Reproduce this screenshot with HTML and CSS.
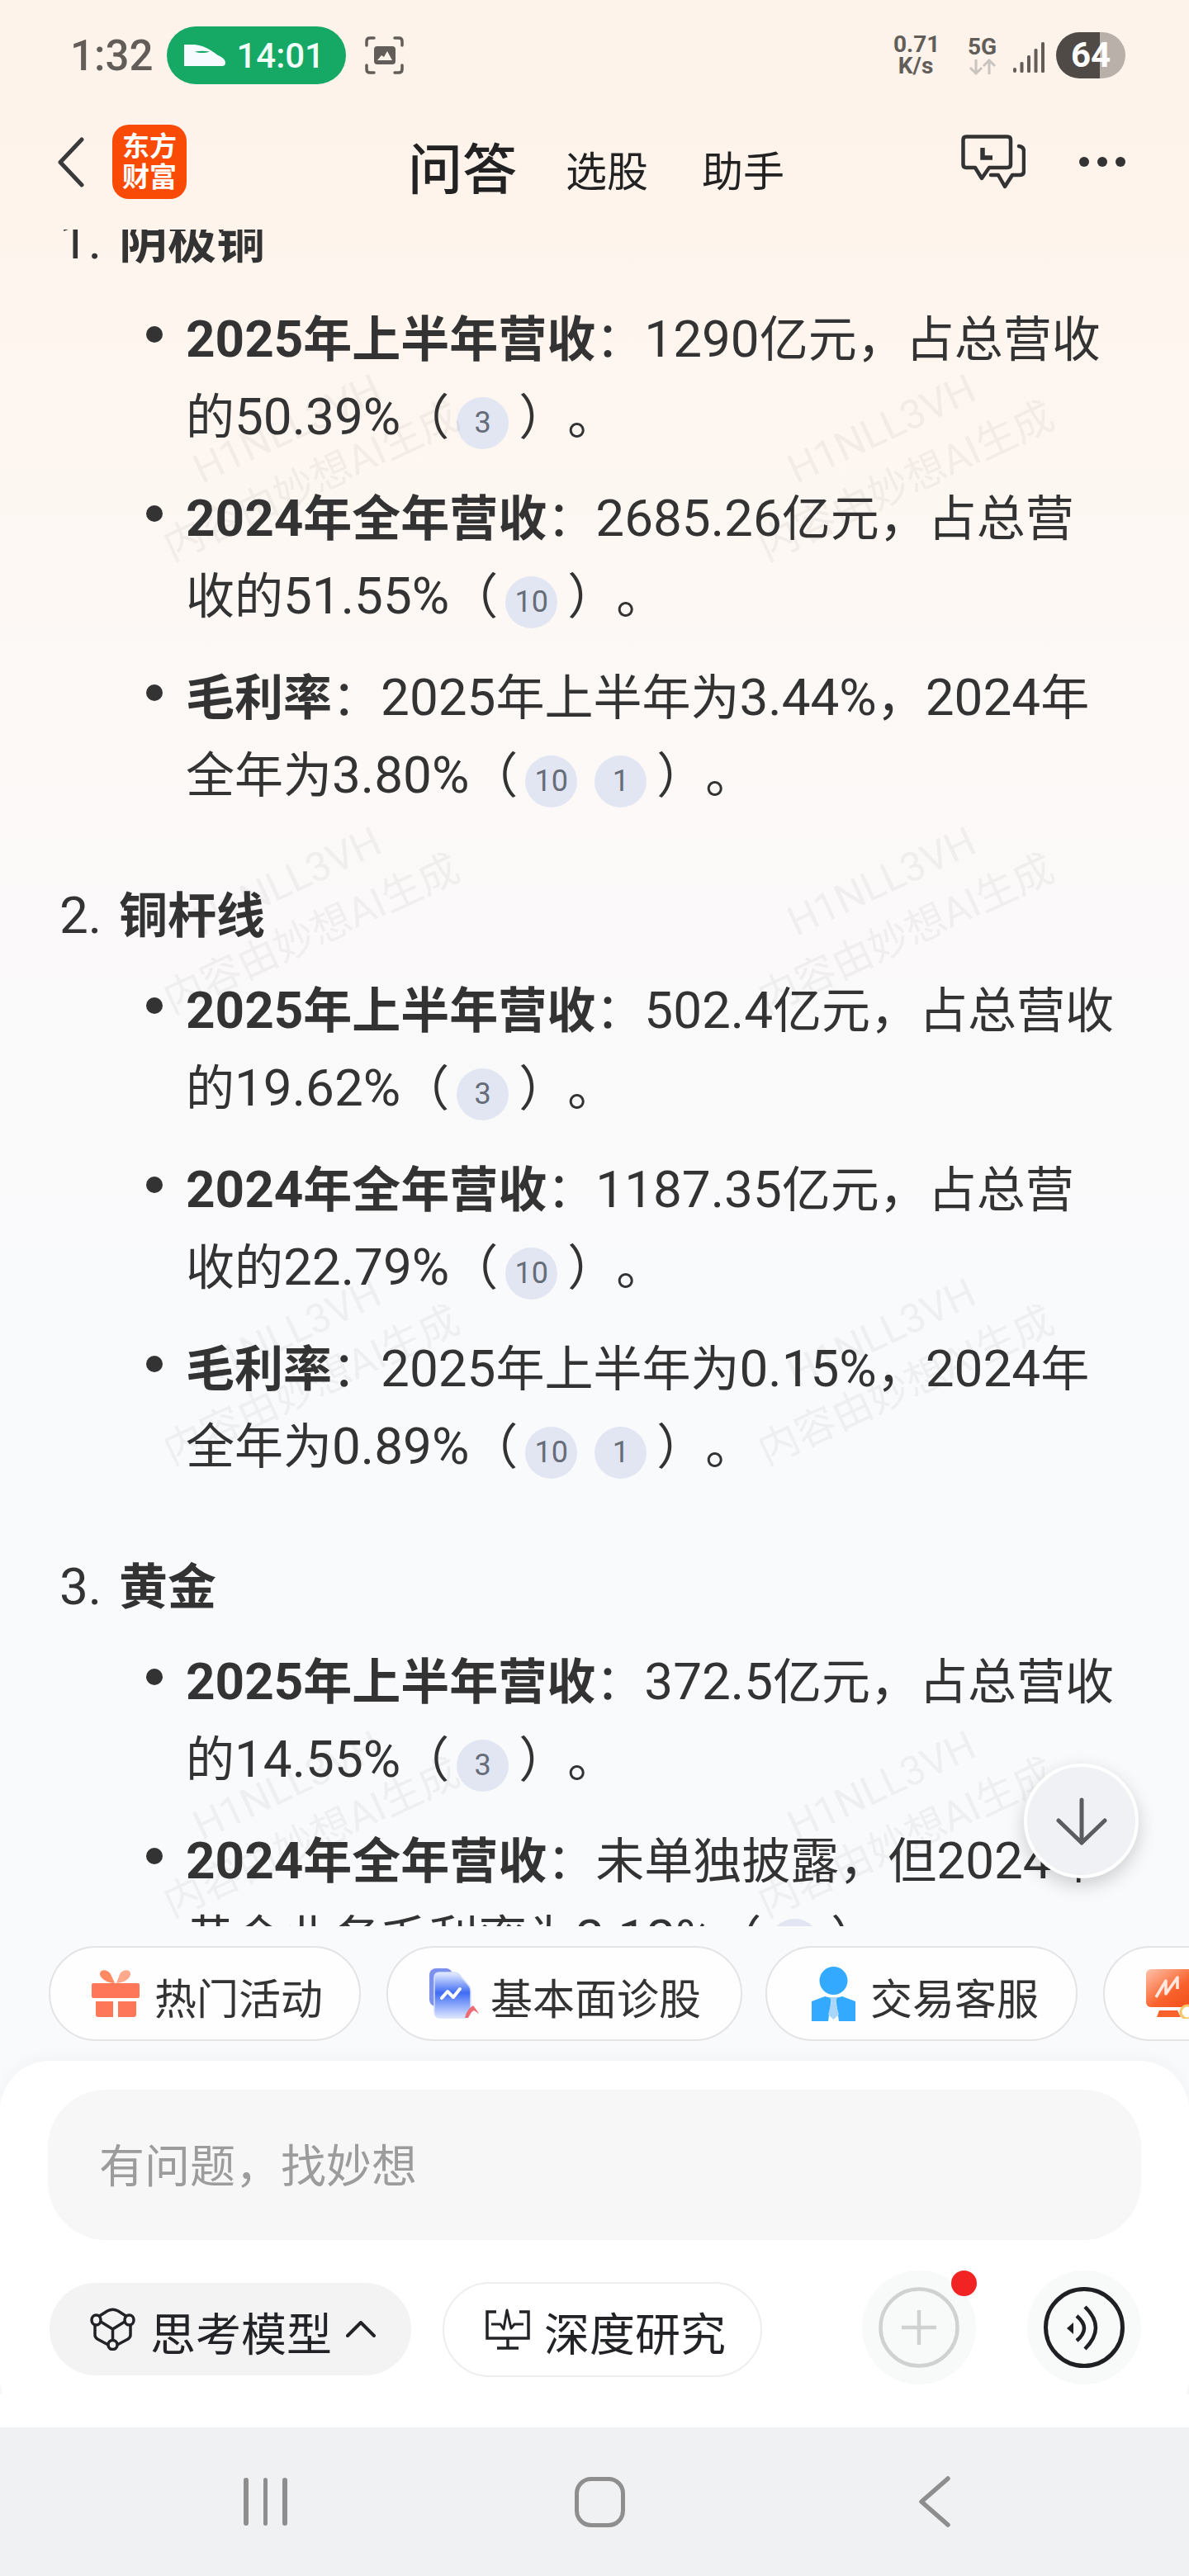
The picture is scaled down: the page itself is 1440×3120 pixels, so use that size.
FILE: index.html
```html
<!DOCTYPE html>
<html lang="zh-CN">
<head>
<meta charset="UTF-8">
<meta name="viewport" content="width=device-width, initial-scale=1.0">
<title>问答</title>
<link rel="stylesheet" href="styles.css">
</head>
<body>
<div class="page">

    <!-- phone status bar -->
    <div class="status-bar">
        <span class="clock">1:32</span>
        <div class="trip-pill">
            <svg class="train" width="50" height="26" viewBox="0 0 50 26">
                <path d="M0 0H13C24 1 33 7 41 13C46 15 50 18 50 22C50 25 48 26 46 26H0Z" fill="#f6fbff"/>
                <path d="M13 8.500C19 7.500 25 7.500 31 8.500C25 10.500 18 10.500 13 8.500Z" fill="#16a865"/>
            </svg>
            <span>14:01</span>
        </div>
        <svg class="shot-icon" width="47" height="46" viewBox="0 0 47 46">
            <path d="M2 11V6Q2 2 6 2H11M36 2H41Q45 2 45 6V11M45 35V40Q45 44 41 44H36M11 44H6Q2 44 2 40V35" fill="none" stroke="#625d58" stroke-width="3.500" stroke-linecap="round"/>
            <rect x="11" y="12" width="26" height="22" rx="4" fill="#625d58"/>
            <path d="M15 29L20 23L23 25L27 18L33 29Z" fill="#fdf3ea"/>
        </svg>
        <div class="status-right">
            <div class="net-speed">0.71<br>K/s</div>
            <div class="net-type">
                <span>5G</span>
                <svg width="34" height="20" viewBox="0 0 34 20">
                    <path d="M9 1V18M2 11L9 18L16 11" fill="none" stroke="#c9c4bf" stroke-width="3"/>
                    <path d="M25 19V2M18 9L25 2L32 9" fill="none" stroke="#c9c4bf" stroke-width="3"/>
                </svg>
            </div>
            <svg class="signal" width="38" height="37" viewBox="0 0 38 37">
                <g fill="#625d58">
                    <rect x="0" y="31" width="4" height="6" rx="2"/>
                    <rect x="8.500" y="24" width="4" height="13" rx="1.500"/>
                    <rect x="17" y="16" width="4" height="21" rx="1.500"/>
                    <rect x="25.500" y="8" width="4" height="29" rx="1.500"/>
                    <rect x="34" y="0" width="4" height="37" rx="1.500"/>
                </g>
            </svg>
            <div class="battery">64</div>
        </div>
    </div>

    <!-- app header -->
    <div class="app-header">
        <svg class="back" width="32" height="61" viewBox="0 0 32 61">
            <path d="M29 3L3 30.500L29 58" fill="none" stroke="#3a3a3a" stroke-width="5" stroke-linecap="round" stroke-linejoin="round"/>
        </svg>
        <div class="logo">东方<br>财富</div>
        <div class="tabs">
            <span class="tab-main">问答</span>
            <span class="tab">选股</span>
            <span class="tab">助手</span>
        </div>
        <div class="header-actions">
            <svg width="78" height="66" viewBox="0 0 78 66">
                <g fill="none" stroke="#333" stroke-width="4.500" stroke-linejoin="round" stroke-linecap="round">
                    <path d="M6 2.500H56Q60 2.500 60 6.500V36Q60 40 56 40H34L25 53L17 40H6Q2.500 40 2.500 36V6.500Q2.500 2.500 6 2.500Z"/>
                    <path d="M70 14Q76 15 76 20V44Q76 49 71 49H62L53 63L45 49H36"/>
                </g>
                <path d="M26 16V28H38" fill="none" stroke="#333" stroke-width="5.500"/>
            </svg>
            <div class="more"><i></i><i></i><i></i></div>
        </div>
    </div>

    <!-- answer text -->
    <div class="content">
        <h3><span class="num">1.</span>阴极铜</h3>
        <ul>
            <li><b><span class="n">2025</span>年上半年营收</b>：<span class="n">1290</span>亿元，占总营收的<span class="n">50.39%</span>（<span class="ref">3</span>）。</li>
            <li><b><span class="n">2024</span>年全年营收</b>：<span class="n">2685.26</span>亿元，占总营收的<span class="n">51.55%</span>（<span class="ref">10</span>）。</li>
            <li><b>毛利率</b>：<span class="n">2025</span>年上半年为<span class="n">3.44%</span>，<span class="n">2024</span>年全年为<span class="n">3.80%</span>（<span class="ref">10</span><span class="ref">1</span>）。</li>
        </ul>
        <h3><span class="num">2.</span>铜杆线</h3>
        <ul>
            <li><b><span class="n">2025</span>年上半年营收</b>：<span class="n">502.4</span>亿元，占总营收的<span class="n">19.62%</span>（<span class="ref">3</span>）。</li>
            <li><b><span class="n">2024</span>年全年营收</b>：<span class="n">1187.35</span>亿元，占总营收的<span class="n">22.79%</span>（<span class="ref">10</span>）。</li>
            <li><b>毛利率</b>：<span class="n">2025</span>年上半年为<span class="n">0.15%</span>，<span class="n">2024</span>年全年为<span class="n">0.89%</span>（<span class="ref">10</span><span class="ref">1</span>）。</li>
        </ul>
        <h3><span class="num">3.</span>黄金</h3>
        <ul>
            <li><b><span class="n">2025</span>年上半年营收</b>：<span class="n">372.5</span>亿元，占总营收的<span class="n">14.55%</span>（<span class="ref">3</span>）。</li>
            <li><b><span class="n">2024</span>年全年营收</b>：未单独披露，但<span class="n">2024</span>年黄金业务毛利率为<span class="n">2.12%</span>（<span class="ref">10</span>）。</li>
        </ul>

        <div class="watermarks">
            <div class="mark"><span>H1NLL3VH</span><span>内容由妙想AI生成</span></div>
            <div class="mark"><span>H1NLL3VH</span><span>内容由妙想AI生成</span></div>
            <div class="mark"><span>H1NLL3VH</span><span>内容由妙想AI生成</span></div>
            <div class="mark"><span>H1NLL3VH</span><span>内容由妙想AI生成</span></div>
            <div class="mark"><span>H1NLL3VH</span><span>内容由妙想AI生成</span></div>
            <div class="mark"><span>H1NLL3VH</span><span>内容由妙想AI生成</span></div>
            <div class="mark"><span>H1NLL3VH</span><span>内容由妙想AI生成</span></div>
            <div class="mark"><span>H1NLL3VH</span><span>内容由妙想AI生成</span></div>
        </div>

        <div class="scroll-down">
            <svg width="62" height="58" viewBox="0 0 62 58">
                <path d="M31 3V55M3 28L31 55L59 28" fill="none" stroke="#5a5c60" stroke-width="5" stroke-linecap="round" stroke-linejoin="round"/>
            </svg>
        </div>
    </div>

    <!-- quick entries -->
    <div class="quick-row">
        <div class="pill">
            <svg width="58" height="57" viewBox="0 0 58 57">
                <path d="M28 16C18 16 9 9 10 4C11 -1 19 -1 23 5Z" fill="#ff8a62"/>
                <path d="M30 16C40 16 48 9 47 4C46 -1 38 -1 34 5Z" fill="#ffa98c"/>
                <rect x="0" y="16" width="58" height="18" rx="2" fill="#ff7759"/>
                <path d="M5 38H26V57H8Q5 57 5 54Z" fill="#ff7759"/>
                <path d="M32 38H54V54Q54 57 51 57H32Z" fill="#ff7759"/>
            </svg>
            <span>热门活动</span>
        </div>
        <div class="pill pill-diagnose">
            <svg width="60" height="61" viewBox="0 0 60 61">
                <defs>
                    <linearGradient id="cardFill" x1="0" y1="0" x2="0" y2="1">
                        <stop offset="0" stop-color="#e8eeff"/>
                        <stop offset="0.450" stop-color="#3f6cf6"/>
                        <stop offset="1" stop-color="#dbe6ff"/>
                    </linearGradient>
                </defs>
                <rect x="0" y="0" width="28" height="46" rx="8" fill="#7c90ee"/>
                <path d="M12 5H30Q35 5 39 11L47 20Q50 23 50 28V52Q50 60 42 60H14Q6 60 6 52V11Q6 5 12 5Z" fill="url(#cardFill)" stroke="#d5dffc" stroke-width="1.500"/>
                <path d="M15 36L22 28L29 35L37 25" fill="none" stroke="#fff" stroke-width="4" stroke-linecap="round" stroke-linejoin="round"/>
                <path d="M43 60Q45 50 53 45Q57 50 60 55L54 51Q50 53 47 60Z" fill="#ee6b74"/>
            </svg>
            <span>基本面诊股</span>
        </div>
        <div class="pill pill-service">
            <svg width="53" height="66" viewBox="0 0 53 66">
                <ellipse cx="26.500" cy="17" rx="17" ry="17" fill="#33aaff"/>
                <path d="M16 36L0 42Q0 42 0 48V66H20L24 38Z" fill="#33aaff"/>
                <path d="M37 36L53 42V66H33L29 38Z" fill="#33aaff"/>
                <path d="M22 37H31L29 43L33 58L26.500 64L20 58L24 43Z" fill="#a9d6fa"/>
            </svg>
            <span>交易客服</span>
        </div>
        <div class="pill pill-last">
            <svg width="64" height="60" viewBox="0 0 64 60">
                <defs>
                    <linearGradient id="screenFill" x1="0" y1="0" x2="1" y2="1">
                        <stop offset="0" stop-color="#ffc3ab"/>
                        <stop offset="0.550" stop-color="#f9622c"/>
                        <stop offset="1" stop-color="#f04a18"/>
                    </linearGradient>
                </defs>
                <rect x="0" y="0" width="64" height="46" rx="6" fill="url(#screenFill)"/>
                <path d="M12 34L24 14V30L38 10V24" fill="none" stroke="#ffe9df" stroke-width="3.500" stroke-linejoin="round"/>
                <path d="M16 50H38L42 58H13Z" fill="#f9622c"/>
                <circle cx="50" cy="52" r="8" fill="#fff" stroke="#f7c667" stroke-width="3"/>
            </svg>
        </div>
    </div>

    <!-- question box -->
    <div class="sheet">
        <div class="ask-box">有问题，找妙想</div>
        <div class="tools">
            <div class="model-chip">
                <svg width="55" height="52" viewBox="0 0 55 52">
                    <g fill="none" stroke="#222326" stroke-width="3.500" stroke-linejoin="round">
                        <path d="M10 11L21 4Q27.500 0.500 34 4L45 11"/>
                        <path d="M6 21V33Q6 36 9 38L22 45M49 21V33Q49 36 46 38L33 45"/>
                        <path d="M13 17L27.500 26L42 17M27.500 26V40"/>
                        <ellipse cx="7.500" cy="15" rx="5.500" ry="6"/>
                        <ellipse cx="47.500" cy="15" rx="5.500" ry="6"/>
                        <ellipse cx="27.500" cy="45" rx="5.500" ry="5.500"/>
                    </g>
                </svg>
                <span>思考模型</span>
                <svg class="caret" width="36" height="20" viewBox="0 0 36 20">
                    <path d="M2 18L18 2L34 18" fill="none" stroke="#222326" stroke-width="4" stroke-linecap="round" stroke-linejoin="round"/>
                </svg>
            </div>
            <div class="research-chip">
                <svg width="54" height="50" viewBox="0 0 54 50">
                    <g fill="none" stroke="#222326" stroke-width="3.500">
                        <path d="M13 4H2V36H52V4H41"/>
                        <path d="M27 36V48M14 48H40"/>
                        <path d="M7 19H18L22 25L26 2L31 24L35 19H46" stroke-width="3" stroke-linejoin="round"/>
                    </g>
                </svg>
                <span>深度研究</span>
            </div>
            <div class="round-btn add-btn">
                <svg width="98" height="98" viewBox="0 0 98 98">
                    <circle cx="49" cy="49" r="46.500" fill="none" stroke="#d0d1d1" stroke-width="4.500"/>
                    <path d="M49 28V70M28 49H70" stroke="#d0d1d1" stroke-width="4.500"/>
                </svg>
                <i class="dot"></i>
            </div>
            <div class="round-btn">
                <svg width="98" height="98" viewBox="0 0 98 98">
                    <circle cx="49" cy="49" r="46.500" fill="none" stroke="#1f2023" stroke-width="5"/>
                    <path d="M28 50L36 43V57Z" fill="#1f2023"/>
                    <path d="M40 35Q58 50 40 65" fill="none" stroke="#1f2023" stroke-width="4.500"/>
                    <path d="M50 24Q76 49 50 75" fill="none" stroke="#1f2023" stroke-width="4.500"/>
                </svg>
            </div>
        </div>
    </div>

    <!-- system navigation -->
    <div class="nav-bar">
        <div class="nav-menu"><i></i><i></i><i></i></div>
        <div class="nav-home"></div>
        <svg width="38" height="62" viewBox="0 0 38 62">
            <path d="M35 3L3 31L35 59" fill="none" stroke="#8e8e8e" stroke-width="5.500" stroke-linecap="round" stroke-linejoin="round"/>
        </svg>
    </div>
</div>
</body>
</html>
```

FILE: styles.css
```css
* {
    box-sizing: border-box;
}

body {
    margin: 0;
    font-family: Roboto, "Noto Sans CJK SC", sans-serif;
    color: #333;
}

.page {
    position: relative;
    width: 1440px;
    height: 3120px;
    overflow: hidden;
    display: flex;
    flex-direction: column;
    background: linear-gradient(180deg, #fef3ea 0, #fef4ec 250px, #fdf8f4 700px, #fbf9f9 1100px, #f9fafc 1600px);
}

/* status bar */
.status-bar {
    flex: none;
    height: 134px;
    display: flex;
    align-items: center;
    padding: 0 77px 0 85px;
}

.clock {
    font-size: 51px;
    font-weight: 500;
    color: #625d58;
}

.trip-pill {
    height: 70px;
    width: 217px;
    margin-left: 17px;
    border-radius: 35px;
    background: #16a865;
    color: #f0fff8;
    display: flex;
    align-items: center;
    padding-left: 21px;
    gap: 13px;
    font-size: 42px;
    font-weight: 500;
}

.shot-icon {
    margin-left: 23px;
}

.status-right {
    margin-left: auto;
    display: flex;
    align-items: center;
}

.net-speed {
    width: 54px;
    font-size: 28px;
    line-height: 26px;
    font-weight: 700;
    text-align: center;
    color: #625d58;
}

.net-type {
    margin-left: 36px;
    width: 35px;
    display: flex;
    flex-direction: column;
    align-items: center;
    font-size: 28px;
    line-height: 28px;
    font-weight: 700;
    color: #625d58;
}

.signal {
    margin-left: 20px;
    margin-top: 4px;
}

.battery {
    margin-left: 14px;
    width: 84px;
    height: 56px;
    border-radius: 28px;
    background: linear-gradient(90deg, #4f4a45 63%, #b8b0a9 63%);
    color: #fff;
    font-size: 42px;
    font-weight: 700;
    line-height: 56px;
    text-align: center;
}

/* app header */
.app-header {
    flex: none;
    height: 144px;
    padding: 0 77px 20px 70px;
    display: flex;
    align-items: center;
    color: #222;
}

.logo {
    width: 90px;
    height: 90px;
    margin-left: 34px;
    padding-top: 8px;
    border-radius: 20px;
    background: #f94b06;
    color: #fff;
    font-size: 33px;
    font-weight: 700;
    line-height: 37px;
    text-align: center;
}

.tabs {
    margin-left: 268px;
    margin-top: 21px;
    display: flex;
    align-items: center;
    gap: 65px;
}

.tab-main {
    font-size: 66px;
    font-weight: 500;
    line-height: 72px;
    margin-right: -6px;
}

.tab {
    font-size: 50px;
    line-height: 72px;
    margin-top: 5px;
}

.header-actions {
    margin-left: auto;
    display: flex;
    align-items: center;
    gap: 65px;
}

.more {
    display: flex;
    gap: 10px;
}

.more i {
    width: 12px;
    height: 12px;
    border-radius: 50%;
    background: #333;
}

/* answer text */
.content {
    position: relative;
    flex: none;
    height: 2055px;
    overflow: hidden;
    padding: 0 90px 0 72px;
    font-size: 59px;
    line-height: 94px;
    text-spacing-trim: space-all;
}

/* latin digits run a little larger than the chinese text around them */
.n,
.num {
    font-size: 62px;
    line-height: 1;
}

.content h3 {
    margin: 0 0 21px;
    font-size: 59px;
    font-weight: 700;
}

/* the list is scrolled, so the first heading is cut by the header */
.content h3:first-child {
    margin: -32px 0 25px;
}

.num {
    display: inline-block;
    width: 72px;
    font-weight: 400;
}

.content ul {
    list-style: none;
    margin: 0 0 76px;
    padding: 0 0 0 153px;
}

.content li {
    margin-bottom: 29px;
}

/* round bullet sits in the list's left gutter */
.content li::before {
    content: "";
    display: inline-block;
    width: 20px;
    height: 20px;
    margin: 0 28px 0 -48px;
    border-radius: 50%;
    background: #333;
    vertical-align: 17px;
}

.ref {
    display: inline-flex;
    justify-content: center;
    width: 63px;
    height: 63px;
    margin: 0 12px 0 9px;
    border-radius: 50%;
    background: #e1e6f2;
    color: #666c78;
    font-size: 36px;
    line-height: 63px;
    vertical-align: 2px;
}

.watermarks {
    position: absolute;
    top: 0;
    left: 0;
    width: 1440px;
    display: grid;
    grid-template-columns: 720px 720px;
    grid-auto-rows: 547.67px;
    pointer-events: none;
}

.mark {
    display: flex;
    flex-direction: column;
    align-items: center;
    justify-content: center;
    padding: 3px 0 0 5px;
    transform: rotate(-25deg);
    font-size: 49px;
    line-height: 70px;
    color: rgba(60, 60, 60, 0.055);
}

.scroll-down {
    position: absolute;
    right: 61px;
    bottom: 58px;
    width: 139px;
    height: 139px;
    display: flex;
    align-items: center;
    justify-content: center;
    border: 4px solid #fff;
    border-radius: 50%;
    background: #eff1f5;
    box-shadow: 0 8px 22px rgba(0, 0, 0, 0.18);
}

/* quick entries */
.quick-row {
    flex: none;
    height: 115px;
    margin: 24px 0;
    padding-left: 59px;
    display: flex;
    gap: 31px;
    overflow: hidden;
}

.pill {
    flex: none;
    height: 115px;
    padding: 0 44px 0 50px;
    display: flex;
    align-items: center;
    gap: 18px;
    border: 2px solid #e4e4e6;
    border-radius: 58px;
    background: #fefefe;
    font-size: 51px;
}

.pill span {
    margin-top: 6px;
}

.pill-diagnose {
    padding-right: 48px;
    gap: 14px;
}

.pill-service {
    margin-left: -3px;
    padding: 0 45px 0 54px;
}

.pill-last {
    width: 300px;
}

/* question box */
.sheet {
    position: relative;
    flex: none;
    height: 444px;
    padding: 35px 58px 0;
    border-radius: 60px;
    background: #fff;
    box-shadow: 0 -4px 20px rgba(0, 0, 0, 0.03);
}

.sheet::after {
    content: "";
    position: absolute;
    left: 0;
    right: 0;
    bottom: 0;
    height: 40px;
    background: #fff;
}

.ask-box {
    height: 182px;
    padding: 4px 0 0 62px;
    border-radius: 70px;
    background: #f7f7f8;
    color: #9c9c9c;
    font-size: 55px;
    line-height: 178px;
}

.tools {
    margin-top: 37px;
    height: 138px;
    display: flex;
    align-items: center;
    color: #222326;
    font-size: 55px;
}

.tools span {
    margin-top: 4px;
}

.model-chip {
    width: 438px;
    height: 112px;
    margin: 4px 0 0 2px;
    padding-left: 49px;
    display: flex;
    align-items: center;
    border-radius: 56px;
    background: #f3f3f4;
}

.model-chip span {
    margin-left: 18px;
}

.caret {
    margin-left: 17px;
}

.research-chip {
    width: 387px;
    height: 115px;
    margin: 4px 0 0 38px;
    padding-left: 50px;
    display: flex;
    align-items: center;
    gap: 17px;
    border: 2px solid #eee;
    border-radius: 58px;
}

.round-btn {
    position: relative;
    flex: none;
    width: 138px;
    height: 138px;
    display: flex;
    align-items: center;
    justify-content: center;
    border-radius: 50%;
    background: #f8f9f9;
}

.add-btn {
    margin-left: auto;
    margin-right: 62px;
}

.dot {
    position: absolute;
    top: 0;
    right: -1px;
    width: 31px;
    height: 31px;
    border-radius: 50%;
    background: #f22323;
}

/* system navigation */
.nav-bar {
    position: relative;
    flex: none;
    height: 180px;
    padding-left: 119px;
    display: grid;
    grid-template-columns: 405px 405px 405px;
    place-items: center;
    background: #f0f1f3;
}

.nav-menu {
    display: flex;
    gap: 18px;
}

.nav-menu i {
    width: 5.500px;
    height: 58px;
    border-radius: 3px;
    background: #8e8e8e;
}

.nav-home {
    width: 61px;
    height: 61px;
    border: 5.500px solid #8e8e8e;
    border-radius: 20px;
}
```
